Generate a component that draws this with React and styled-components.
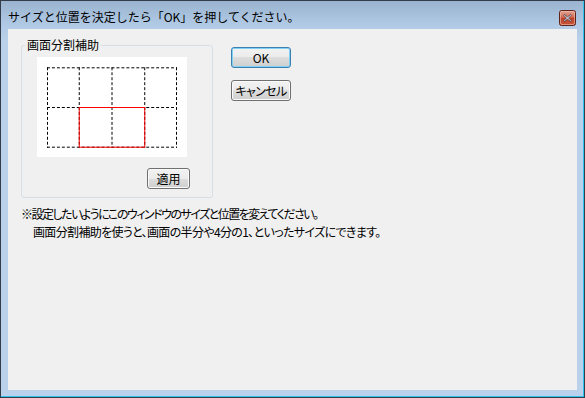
import React from "react";
import styled, { createGlobalStyle } from "styled-components";

const GlobalStyle = createGlobalStyle`
  html, body { margin: 0; padding: 0; background: #ffffff; }
  body { font-family: "Noto Sans CJK JP", "Noto Sans", sans-serif; }
  * { box-sizing: border-box; }
`;

const FONT = `"Noto Sans CJK JP", "Noto Sans", sans-serif`;

const Window = styled.div`
  width: 585px;
  height: 398px;
  border: 1px solid #323d49;
  display: flex;
  flex-direction: column;
`;

const Frame = styled.div`
  flex: 1;
  display: flex;
  flex-direction: column;
  border-right: 1px solid #2fc3ef;
  border-bottom: 1px solid #2fc3ef;
  background: linear-gradient(to bottom, #9ab4d0 0px, #b2cbe6 26px, #b9d1ea 40px, #b9d1ea 100%);
`;

const TitleBar = styled.div`
  height: 28px;
  display: flex;
  align-items: flex-start;
  justify-content: space-between;
  padding-left: 7px;
`;

const Title = styled.div`
  font-family: ${FONT};
  font-size: 12px;
  line-height: 16px;
  padding-top: 8px;
  color: #000;
  white-space: nowrap;
`;

const CloseButton = styled.div`
  width: 17px;
  height: 16px;
  margin-top: 9px;
  margin-right: 7px;
  display: flex;
`;

const Client = styled.div`
  flex: 1;
  margin: 0 6px 6px 7px;
  background: #f0f0f0;
  display: flex;
  flex-direction: column;
  padding-left: 13px;
`;

const TopRow = styled.div`
  display: flex;
  align-items: flex-start;
`;

const GroupBox = styled.div`
  position: relative;
  margin-top: 16px;
  width: 192px;
  height: 153px;
  border: 1px solid #d5dfe5;
  border-radius: 3px;
  padding: 11px 22px 8px 15px;
  display: flex;
  flex-direction: column;
`;

const GroupLabel = styled.span`
  position: absolute;
  top: -9px;
  left: 3px;
  padding: 0 2px;
  background: #f0f0f0;
  font-family: ${FONT};
  font-size: 12px;
  line-height: 16px;
  color: #000;
`;

const Canvas = styled.div`
  width: 150px;
  height: 100px;
  background: #ffffff;
  padding: 10px;
  display: flex;
`;

const ButtonRow = styled.div`
  margin-top: 11px;
  display: flex;
  justify-content: flex-end;
`;

const ButtonColumn = styled.div`
  margin-top: 18px;
  margin-left: 18px;
  display: flex;
  flex-direction: column;
  gap: 12px;
`;

const Button = styled.button`
  width: ${(p) => p.$w}px;
  height: 21px;
  padding: 0;
  border: 1px solid ${(p) => (p.$default ? "#3c7fb1" : "#707070")};
  border-radius: 3px;
  background: linear-gradient(to bottom, #f2f2f2 0%, #ebebeb 50%, #dddddd 50%, #cfcfcf 100%);
  box-shadow: inset 0 0 0 1px ${(p) => (p.$default ? "#7fd0f5" : "#fbfbfb")};
  font-family: ${FONT};
  font-size: 12px;
  line-height: 19px;
  color: #000;
  text-align: center;
  white-space: nowrap;
  font-feature-settings: "palt";
  letter-spacing: ${(p) => p.$ls || 0}px;
`;

const Note = styled.div`
  margin-top: 7px;
  display: flex;
  flex-direction: column;
`;

const NoteLine = styled.div`
  font-family: ${FONT};
  font-size: 12px;
  line-height: 18px;
  color: #000;
  white-space: nowrap;
  padding-left: ${(p) => (p.$indent ? 12 : 0)}px;
  font-feature-settings: "palt";
  letter-spacing: ${(p) => p.$ls}px;
`;

function CloseIcon() {
  return (
    <svg width="17" height="16" viewBox="0 0 17 16">
      <defs>
        <linearGradient id="cg" x1="0" y1="0" x2="0" y2="1">
          <stop offset="0" stopColor="#e7a796" />
          <stop offset="0.45" stopColor="#d06a52" />
          <stop offset="0.5" stopColor="#bf4228" />
          <stop offset="1" stopColor="#c5553a" />
        </linearGradient>
      </defs>
      <rect x="0.5" y="0.5" width="16" height="15" rx="2" fill="url(#cg)" stroke="#5e2219" />
      <rect x="1.5" y="1.5" width="14" height="13" rx="1.5" fill="none" stroke="#eec0b4" strokeOpacity="0.6" />
      <path
        d="M5.5 4.5 L8.5 7 L11.5 4.5 L12 5.5 L9.5 8 L12 10.5 L11.5 11.5 L8.5 9 L5.5 11.5 L5 10.5 L7.5 8 L5 5.5 Z"
        fill="#ffffff"
        stroke="#3a3a52"
        strokeWidth="0.8"
        strokeLinejoin="round"
      />
    </svg>
  );
}

function SplitGrid() {
  const xs = [0.5, 32.5, 65.5, 98.5, 130.5];
  const ys = [0.5, 40.5, 80.5];
  return (
    <svg width="131" height="81" viewBox="0 0 131 81" style={{ display: "block" }}>
      {xs.map((x) => (
        <line key={"v" + x} x1={x} y1="0" x2={x} y2="81" stroke="#000" strokeWidth="1" strokeDasharray="3 2" />
      ))}
      {ys.map((y) => (
        <line key={"h" + y} x1="0" y1={y} x2="131" y2={y} stroke="#000" strokeWidth="1" strokeDasharray="3 2" />
      ))}
      <rect x="32.5" y="40.5" width="66" height="40" fill="none" stroke="#ff0000" strokeWidth="1" />
    </svg>
  );
}

export default function App() {
  return (
    <>
      <GlobalStyle />
      <Window>
        <Frame>
          <TitleBar>
            <Title>サイズと位置を決定したら「OK」を押してください。</Title>
            <CloseButton>
              <CloseIcon />
            </CloseButton>
          </TitleBar>
          <Client>
            <TopRow>
              <GroupBox>
                <GroupLabel>画面分割補助</GroupLabel>
                <Canvas>
                  <SplitGrid />
                </Canvas>
                <ButtonRow>
                  <Button $w={43}>適用</Button>
                </ButtonRow>
              </GroupBox>
              <ButtonColumn>
                <Button $w={60} $default>
                  OK
                </Button>
                <Button $w={60} $ls={-0.6}>キャンセル</Button>
              </ButtonColumn>
            </TopRow>
            <Note>
              <NoteLine $ls={-1.5}>※設定したいようにこのウィンドウのサイズと位置を変えてください。</NoteLine>
              <NoteLine $indent $ls={-0.65}>画面分割補助を使うと、画面の半分や4分の1、といったサイズにできます。</NoteLine>
            </Note>
          </Client>
        </Frame>
      </Window>
    </>
  );
}
